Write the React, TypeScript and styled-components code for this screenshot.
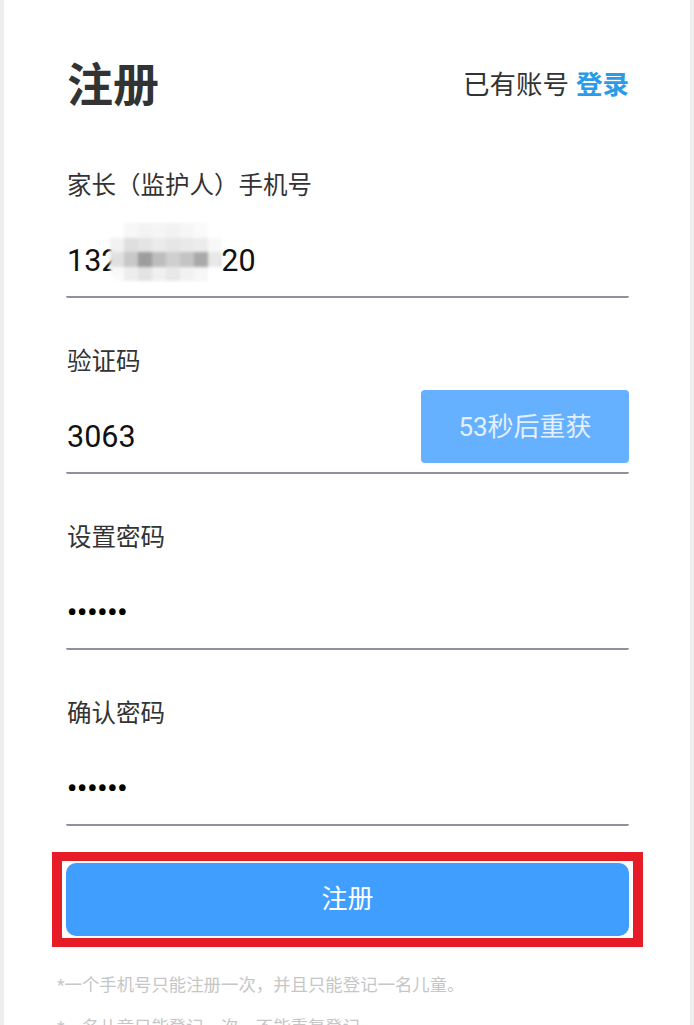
import React from 'react';
import styled, { createGlobalStyle } from 'styled-components';

const GlobalStyle = createGlobalStyle`
  html, body {
    margin: 0;
    padding: 0;
    background: #eeeeee;
  }
  * {
    box-sizing: border-box;
  }
`;

const fontStack = `Roboto, "Noto Sans CJK SC", "Noto Sans", sans-serif`;

const StyledPage = styled.div`
  margin: 0 4px;
  min-height: 100vh;
  background: #ffffff;
  padding: 56px 61px 0 62px;
  font-family: ${fontStack};
  color: #333333;
  overflow: hidden;
`;

const StyledHeader = styled.div`
  height: 58px;
  display: flex;
  align-items: center;
  justify-content: space-between;
`;

const StyledTitle = styled.h1`
  margin: 0 0 0 1px;
  font-size: 46px;
  line-height: 58px;
  font-weight: 700;
  color: #333333;
`;

const StyledLoginHint = styled.div`
  font-size: 26.5px;
  line-height: 34px;
  color: #333333;
  display: flex;
  gap: 7px;
`;

const StyledLoginLink = styled.a`
  color: #2b9be8;
  font-weight: 700;
  text-decoration: none;
`;

const StyledForm = styled.div`
  display: flex;
  flex-direction: column;
  padding-top: 55px;
`;

const StyledField = styled.div<{ $first?: boolean }>`
  display: flex;
  flex-direction: column;
  margin-top: ${(p) => (p.$first ? '0' : '47px')};
`;

const StyledLabel = styled.label`
  font-size: 24.5px;
  line-height: 34px;
  color: #333333;
  margin-left: 1px;
`;

const StyledInputRow = styled.div`
  margin-top: 21px;
  height: 74px;
  display: flex;
  align-items: center;
  justify-content: space-between;
  border-bottom: 2px solid #8d929a;
  border-radius: 0 0 2px 2px;
`;

const StyledValue = styled.span`
  position: relative;
  font-size: 30.5px;
  line-height: 40px;
  color: #111111;
  margin-left: 1px;
  margin-top: 2px;
`;

const StyledDots = styled(StyledValue)`
  font-size: 28px;
  font-weight: 700;
  letter-spacing: 0;
  color: #000000;
`;

const StyledMosaic = styled.span`
  position: absolute;
  left: 43px;
  top: -18px;
  width: 112px;
  height: 58px;
  display: grid;
  grid-template-columns: repeat(8, 1fr);
  grid-template-rows: repeat(4, 1fr);
  filter: blur(1.5px);
  border-radius: 12px;
  overflow: hidden;
`;

const StyledMosaicCell = styled.span<{ $shade: string }>`
  background: ${(p) => p.$shade};
`;

const StyledCodeButton = styled.button`
  align-self: flex-end;
  margin-bottom: 9px;
  flex-shrink: 0;
  width: 208px;
  height: 73px;
  border: none;
  border-radius: 4px;
  background: #66b1ff;
  color: #e4efff;
  font-family: ${fontStack};
  font-size: 26px;
  padding: 0 0 5px;
`;

const StyledHighlight = styled.div`
  margin: 26px -14px 0;
  border: 10px solid #e61d26;
  border-top-width: 9px;
  border-bottom-width: 9px;
  padding: 2px 4px;
  background: #ffffff;
`;

const StyledSubmit = styled.button`
  display: block;
  width: 100%;
  height: 73px;
  border: none;
  border-radius: 10px;
  background: #409eff;
  color: #ffffff;
  font-family: ${fontStack};
  font-size: 26px;
  padding: 0 0 6px;
`;

const StyledNotes = styled.div`
  margin: 26px 0 0 -9px;
  display: flex;
  flex-direction: column;
  gap: 18px;
`;

const StyledNote = styled.p`
  margin: 0;
  font-size: 17.4px;
  line-height: 24px;
  color: #c6c6c6;
  white-space: nowrap;
`;

const mosaicShades = [
  '#ffffff', '#f7f7f7', '#f3f3f3', '#f5f5f5', '#f2f2f2', '#f6f6f6', '#fafafa', '#ffffff',
  '#f2f2f2', '#dedede', '#e4e4e4', '#ebebeb', '#e6e6e6', '#e9e9e9', '#ececec', '#f8f8f8',
  '#e0e0e0', '#c8c8c8', '#9d9d9d', '#bdbdbd', '#cfcfcf', '#c4c4c4', '#a9a9a9', '#e8e8e8',
  '#f9f9f9', '#ededed', '#e3e3e3', '#f0f0f0', '#e8e8e8', '#f1f1f1', '#f6f6f6', '#ffffff',
];

export default function App() {
  return (
    <>
      <GlobalStyle />
      <StyledPage>
        <StyledHeader>
          <StyledTitle>注册</StyledTitle>
          <StyledLoginHint>
            <span>已有账号</span>
            <StyledLoginLink href="#">登录</StyledLoginLink>
          </StyledLoginHint>
        </StyledHeader>

        <StyledForm>
          <StyledField $first>
            <StyledLabel>家长（监护人）手机号</StyledLabel>
            <StyledInputRow>
              <StyledValue>
                13212345620
                <StyledMosaic>
                  {mosaicShades.map((shade, i) => (
                    <StyledMosaicCell key={i} $shade={shade} />
                  ))}
                </StyledMosaic>
              </StyledValue>
            </StyledInputRow>
          </StyledField>

          <StyledField>
            <StyledLabel>验证码</StyledLabel>
            <StyledInputRow>
              <StyledValue>3063</StyledValue>
              <StyledCodeButton>53秒后重获</StyledCodeButton>
            </StyledInputRow>
          </StyledField>

          <StyledField>
            <StyledLabel>设置密码</StyledLabel>
            <StyledInputRow>
              <StyledDots>••••••</StyledDots>
            </StyledInputRow>
          </StyledField>

          <StyledField>
            <StyledLabel>确认密码</StyledLabel>
            <StyledInputRow>
              <StyledDots>••••••</StyledDots>
            </StyledInputRow>
          </StyledField>

          <StyledHighlight>
            <StyledSubmit>注册</StyledSubmit>
          </StyledHighlight>

          <StyledNotes>
            <StyledNote>*一个手机号只能注册一次，并且只能登记一名儿童。</StyledNote>
            <StyledNote>*一名儿童只能登记一次，不能重复登记。</StyledNote>
          </StyledNotes>
        </StyledForm>
      </StyledPage>
    </>
  );
}
